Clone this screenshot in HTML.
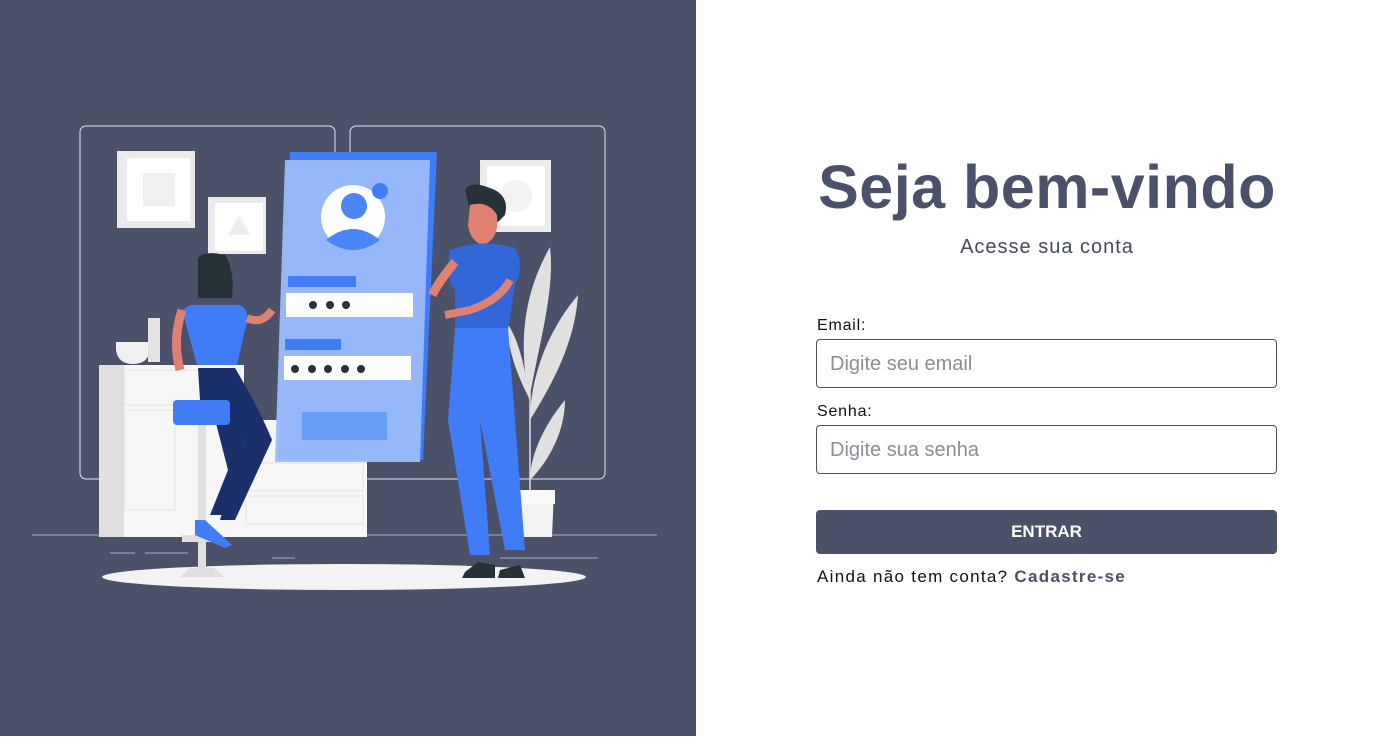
<!DOCTYPE html>
<html><head><meta charset="utf-8"><style>
*{margin:0;padding:0;box-sizing:border-box}
body{width:1392px;height:736px;overflow:hidden;font-family:"Liberation Sans",sans-serif;background:#fff;position:relative}
.left{position:absolute;left:0;top:0;width:696px;height:736px;background:#4a5169}
.a{position:absolute}
h1{position:absolute;left:816px;top:152px;width:462px;text-align:center;font-size:61px;font-weight:bold;color:#4a5169;letter-spacing:0.5px;white-space:nowrap}
.sub{left:816px;width:462px;text-align:center;top:236px;font-size:20px;color:#444b5f;letter-spacing:1px}
.lab{left:817px;font-size:16px;color:#111;letter-spacing:0.8px}
.inp{left:816px;width:461px;height:49px;border:1px solid #4a5169;border-radius:4px;font-size:20px;color:#8a8d9a;padding:13px 0 0 13px}
.btn{left:816px;top:510px;width:461px;height:44px;background:#4a5169;border-radius:4px;color:#fff;font-weight:bold;font-size:17px;text-align:center;line-height:44px}
.foot{left:817px;top:567px;font-size:17px;color:#111;letter-spacing:1.3px;white-space:nowrap}
.foot b{color:#4a5169}
</style></head><body>
<div class="left">
<svg width="696" height="736" viewBox="0 0 696 736">
<g fill="none" stroke="#e6e6e6" stroke-width="1">
<rect x="80" y="126" width="255" height="353" rx="6"/>
<rect x="350" y="126" width="255" height="353" rx="6"/>
</g>
<line x1="32" y1="535" x2="657" y2="535" stroke="#8a8fa0" stroke-width="1.5"/>
<g stroke="#8a8fa0" stroke-width="1.5"><line x1="110" y1="553" x2="135" y2="553"/><line x1="145" y1="553" x2="188" y2="553"/><line x1="272" y1="558" x2="295" y2="558"/><line x1="500" y1="558" x2="598" y2="558"/></g>
<ellipse cx="344" cy="577" rx="242" ry="13" fill="#f3f3f3"/>
<rect x="117" y="151" width="78" height="77" fill="#ebebeb"/><rect x="127" y="158" width="63" height="63" fill="#fff"/><rect x="143" y="173" width="32" height="33" fill="#f0f0f0"/>
<rect x="208" y="197" width="58" height="57" fill="#ebebeb"/><rect x="215" y="203" width="48" height="48" fill="#fff"/><polygon points="239,215 228,235 250,235" fill="#eee"/>
<rect x="480" y="160" width="71" height="72" fill="#ebebeb"/><rect x="487" y="166" width="58" height="60" fill="#fff"/><circle cx="516" cy="196" r="16" fill="#f2f2f2"/>
<g fill="#e0e0e0"><path d="M550 247 C520 300 520 350 529 400 C540 340 555 290 550 247Z"/><path d="M578 295 C540 340 530 390 530 420 C555 380 575 340 578 295Z"/><path d="M565 400 C540 430 530 460 530 480 C550 460 565 430 565 400Z"/><path d="M505 320 C510 360 520 380 530 400 C525 370 520 340 505 320Z"/></g>
<line x1="530" y1="380" x2="530" y2="490" stroke="#e0e0e0" stroke-width="1.5"/>
<polygon points="518,490 554,490 552,537 520,537" fill="#f2f2f2"/><rect x="516" y="490" width="39" height="14" fill="#fafafa"/>
<rect x="99" y="365" width="145" height="172" fill="#f7f7f7"/><rect x="99" y="365" width="25" height="172" fill="#e0e0e0"/>
<rect x="125" y="370" width="115" height="35" fill="none" stroke="#e3e3e3"/><rect x="125" y="410" width="50" height="100" fill="none" stroke="#e3e3e3"/>
<rect x="243" y="420" width="124" height="117" fill="#f7f7f7"/><rect x="246" y="463" width="117" height="28" fill="none" stroke="#e3e3e3"/><rect x="246" y="496" width="117" height="28" fill="none" stroke="#e3e3e3"/>
<path d="M116 342 H150 V350 Q148 364 133 364 Q118 364 116 350Z" fill="#f0f0f0"/><path d="M148 318 H160 V362 H148Z" fill="#e3e3e3"/>
<polygon points="290,152 437,152 423,460 278,460" fill="#3f7cf5"/>
<polygon points="285,160 430,160 420,462 275,462" fill="#9bbcfb" opacity=".95"/>
<circle cx="353" cy="217" r="32" fill="#fff"/><circle cx="354" cy="206" r="13" fill="#4a86f7"/><path d="M326 240 Q353 218 380 240 Q353 260 326 240Z" fill="#4a86f7"/><circle cx="380" cy="191" r="8" fill="#3f7cf5"/>
<rect x="288" y="276" width="68" height="11" fill="#3f7cf5"/><rect x="286" y="293" width="127" height="24" fill="#fff"/>
<rect x="285" y="339" width="56" height="11" fill="#3f7cf5"/><rect x="284" y="356" width="127" height="24" fill="#fff"/>
<g fill="#263238"><circle cx="313" cy="305" r="4"/><circle cx="330" cy="305" r="4"/><circle cx="346" cy="305" r="4"/><circle cx="295" cy="369" r="4"/><circle cx="312" cy="369" r="4"/><circle cx="328" cy="369" r="4"/><circle cx="345" cy="369" r="4"/><circle cx="361" cy="369" r="4"/></g>
<rect x="302" y="412" width="85" height="28" fill="#6a9cf9"/>
<path d="M198 258 Q205 250 225 255 Q235 270 232 298 H198Z" fill="#263238"/>
<path d="M182 310 L190 305 H240 Q252 312 245 330 L237 365 H197 Z" fill="#3f7cf5"/>
<path d="M182 310 Q172 340 180 370" stroke="#e08070" stroke-width="9" fill="none"/>
<path d="M247 318 Q262 325 272 310" stroke="#e08070" stroke-width="8" fill="none"/>
<path d="M198 368 H235 Q260 410 272 440 L235 520 H220 L245 440 Q225 420 200 400Z" fill="#1b306a"/>
<path d="M210 400 L228 470 L210 515 H225 L245 440Z" fill="#1b306a"/>
<rect x="173" y="400" width="57" height="25" rx="4" fill="#3f7cf5"/><rect x="198" y="425" width="8" height="110" fill="#e0e0e0"/><rect x="182" y="535" width="40" height="7" fill="#e0e0e0"/><rect x="198" y="540" width="8" height="30" fill="#e0e0e0"/><path d="M180 577 L190 568 H214 L224 577Z" fill="#e0e0e0"/>
<path d="M195 520 L205 520 L232 545 L225 548 L195 535Z" fill="#3f7cf5"/>
<path d="M465 190 Q470 180 490 188 Q510 195 505 215 L498 222 L470 210Z" fill="#263238"/>
<path d="M470 205 Q488 200 497 215 Q500 240 482 245 Q470 240 468 225Z" fill="#e08070"/>
<path d="M450 250 Q480 238 515 248 Q525 265 515 285 L508 330 H455 L455 290 Q445 280 450 250Z" fill="#3366d6"/>
<path d="M455 262 Q440 280 432 295" stroke="#e08070" stroke-width="9" fill="none"/>
<path d="M510 280 Q500 300 470 310 L445 315" stroke="#e08070" stroke-width="8" fill="none"/>
<path d="M455 328 H508 L525 550 H505 L480 420 L490 555 H470 L448 420Z" fill="#3f7cf5"/>
<path d="M465 572 L478 562 L495 565 L495 578 H462Z" fill="#263238"/><path d="M500 570 L520 565 L525 578 H498Z" fill="#263238"/>
</svg>
</div>
<h1>Seja bem-vindo</h1>
<div class="a sub">Acesse sua conta</div>
<div class="a lab" style="top:317px">Email:</div>
<div class="a inp" style="top:339px">Digite seu email</div>
<div class="a lab" style="top:403px">Senha:</div>
<div class="a inp" style="top:425px">Digite sua senha</div>
<div class="a btn">ENTRAR</div>
<div class="a foot">Ainda não tem conta? <b>Cadastre-se</b></div>
</body></html>
